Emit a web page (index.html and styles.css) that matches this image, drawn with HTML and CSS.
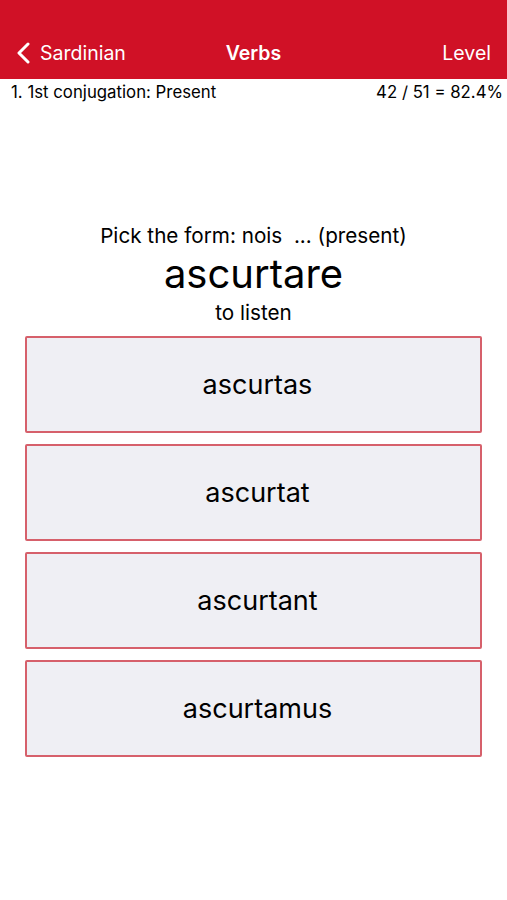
FILE: index.html
```html
<!DOCTYPE html>
<html lang="en">
<head>
    <meta charset="UTF-8">
    <meta name="viewport" content="width=device-width, initial-scale=1.0">
    <title>Verbs</title>
    <link rel="stylesheet" href="styles.css">
</head>
<body>
    <div class="navbar">
        <div class="nav-left">
            <svg class="chevron" width="14" height="22" viewBox="0 0 14 22">
                <path d="M12 2 L3 11 L12 20" fill="none" stroke="#fff" stroke-width="3" stroke-linecap="round" stroke-linejoin="round"/>
            </svg>
            <span>Sardinian</span>
        </div>
        <div class="nav-title">Verbs</div>
        <div class="nav-right">Level</div>
    </div>
    <div class="subheader">
        <span>1. 1st conjugation: Present</span>
        <span>42 / 51 = 82.4%</span>
    </div>
    <div class="question-container">
        <p class="prompt">Pick the form: nois &nbsp;... (present)</p>
        <h2 class="verb">ascurtare</h2>
        <p class="meaning">to listen</p>
    </div>
    <div class="answers-container">
        <button class="answer">ascurtas</button>
        <button class="answer">ascurtat</button>
        <button class="answer">ascurtant</button>
        <button class="answer">ascurtamus</button>
    </div>
</body>
</html>
```

FILE: styles.css
```css
* {
    margin: 0;
    padding: 0;
    box-sizing: border-box;
}

body {
    font-family: Inter, 'Liberation Sans', sans-serif;
    background: #ffffff;
    color: #000;
    width: 507px;
    height: 900px;
}

.navbar {
    background: #D01126;
    height: 79px;
    padding: 26px 16px 0 16px;
    display: flex;
    align-items: center;
    justify-content: space-between;
    color: #fff;
    font-size: 19.5px;
}

.nav-left {
    display: flex;
    align-items: center;
    gap: 10px;
    width: 140px;
}

.chevron {
    display: block;
}

.nav-title {
    font-weight: 600;
    text-align: center;
}

.nav-right {
    width: 140px;
    text-align: right;
}

.subheader {
    display: flex;
    justify-content: space-between;
    padding: 3px 4px 0 11px;
    font-size: 16.8px;
    line-height: 20px;
}

.question-container {
    margin-top: 121px;
    text-align: center;
}

.prompt {
    font-size: 20.7px;
    line-height: 26px;
}

.verb {
    font-size: 40px;
    font-weight: normal;
    line-height: 50px;
}

.meaning {
    font-size: 20.7px;
    line-height: 26px;
    margin-top: 1px;
}

.answers-container {
    display: flex;
    flex-direction: column;
    gap: 11px;
    margin: 10px 25px 0 25px;
}

.answer {
    height: 97px;
    padding-left: 8px;
    background: #EFEFF4;
    border: 2px solid #D6606B;
    border-radius: 2px;
    font-family: inherit;
    font-size: 27px;
    color: #000;
}
```
